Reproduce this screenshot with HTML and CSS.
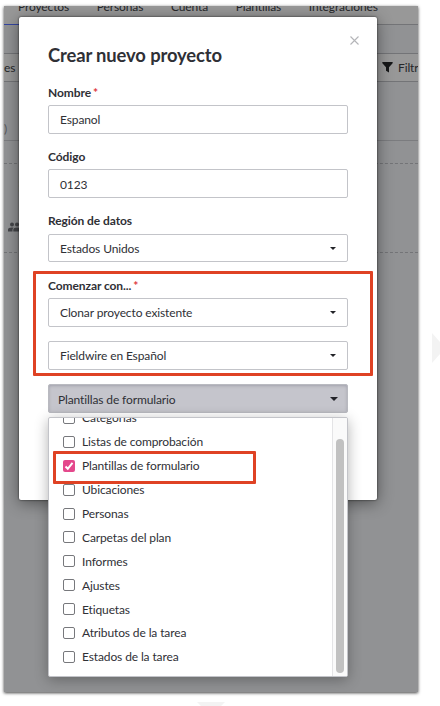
FILE: index.html
```html
<!DOCTYPE html>
<html lang="es">

<head>
    <meta charset="UTF-8">
    <meta name="viewport" content="width=device-width, initial-scale=1.0">
    <title>Crear nuevo proyecto</title>
    <link rel="stylesheet" href="styles.css">
</head>
<body>
    <div class="window">
        <!-- Dimmed page behind the dialog -->
        <div class="page">
            <nav class="tabs">
                <span>Proyectos</span>
                <span>Personas</span>
                <span>Cuenta</span>
                <span>Plantillas</span>
                <span>Integraciones</span>
            </nav>
            <div class="tab-line"></div>
            <div class="spacer"></div>
            <div class="toolbar">
                <span>es</span>
                <span class="filter">
                    <svg width="11" height="11" viewBox="0 0 11 11"><path d="M.8 0h9.4q1 .2.4 1.200L7 5.300v5.200L4 8.700V5.300L.4 1.200Q-.2.200.8 0z" fill="#161718"/></svg>
                    Filtros
                </span>
            </div>
            <div class="summary">)</div>
            <div class="gap-row"></div>
            <div class="project">
                <span class="dots">⋮</span>
                <svg class="people" width="18" height="10" viewBox="0 0 18 10" fill="#45464a"><circle cx="4" cy="2.4" r="2"/><circle cx="9" cy="2.4" r="2"/><path d="M0 9.500V7.600Q0 5.500 4 5.400q1 0 1.600.3Q4.500 6.500 4.500 7.700v1.800zM5.300 9.500V7.600Q5.400 5.500 9 5.400q4 .1 4 2.200v1.900z"/></svg>
            </div>
        </div>

        <!-- Dialog -->
        <div class="modal">
            <svg class="close" width="9" height="9" viewBox="0 0 9 9"><path d="M.5.5l8 8M8.500.5l-8 8" stroke="#b4b5b8" stroke-width="1.100"/></svg>
            <h1>Crear nuevo proyecto</h1>
            <label>Nombre <i>*</i></label>
            <div class="field">Espanol</div>
            <label>Código</label>
            <div class="field code">0123</div>
            <label class="region-label">Región de datos</label>
            <div class="field select region">Estados Unidos</div>
            <label>Comenzar con... <i>*</i></label>
            <div class="field select">Clonar proyecto existente</div>
            <div class="field select source">Fieldwire en Español</div>
            <div class="field select multi">Plantillas de formulario</div>
            <div class="highlight start-highlight"></div>

            <!-- Open menu -->
            <div class="menu">
                <ul>
                    <li><span class="box"></span>Categorías</li>
                    <li><span class="box"></span>Listas de comprobación</li>
                    <li><span class="box checked"><svg width="12" height="12" viewBox="0 0 12 12"><path d="M2.500 6.500l2.300 2.300 4.700-6" fill="none" stroke="#fff" stroke-width="2"/></svg></span>Plantillas de formulario</li>
                    <li><span class="box"></span>Ubicaciones</li>
                    <li><span class="box"></span>Personas</li>
                    <li><span class="box"></span>Carpetas del plan</li>
                    <li><span class="box"></span>Informes</li>
                    <li><span class="box"></span>Ajustes</li>
                    <li><span class="box"></span>Etiquetas</li>
                    <li><span class="box"></span>Atributos de la tarea</li>
                    <li><span class="box"></span>Estados de la tarea</li>
                </ul>
                <div class="scrollbar"><div class="thumb"></div></div>
            </div>
            <div class="highlight option-highlight"></div>
        </div>
    </div>

    <div class="mark mark-right"></div>
    <div class="mark mark-bottom"></div>
</body>

</html>
```
FILE: styles.css
```css
* {
    box-sizing: border-box;
    margin: 0;
    padding: 0;
}

body {
    position: relative;
    width: 440px;
    height: 706px;
    padding: 6px 22px 14px 4px;
    overflow: hidden;
    background-color: #fff;
    color: #2f3036;
    font-family: Lato, sans-serif;
    font-size: 12px;
    letter-spacing: -0.12px;
}

.window {
    position: relative;
    height: 686px;
    box-shadow: 0 1px 3px rgba(0, 0, 0, 0.75);
}

.page {
    height: 100%;
    overflow: hidden;
    background-color: #919294;
    color: #26272a;
}

.tabs {
    display: flex;
    gap: 27.7px;
    height: 17px;
    padding-left: 14px;
    background-color: #989898;
    line-height: 15px;
    white-space: nowrap;
}

.tabs span {
    margin-top: -7px;
}

.tab-line {
    height: 2px;
    background: linear-gradient(to right, #3546a0 15px, #737477 15px) bottom / 100% 1px no-repeat #989898;
}

.spacer {
    height: 28px;
}

.toolbar {
    display: flex;
    justify-content: space-between;
    align-items: center;
    height: 29px;
    border-top: 1px solid #737477;
    border-bottom: 1px solid #737477;
    background-color: #989898;
}

.filter {
    display: flex;
    align-items: center;
    gap: 5px;
    width: 36px;
    white-space: nowrap;
}

.filter svg {
    flex-shrink: 0;
}

.summary {
    height: 59px;
    padding-top: 39px;
    border-bottom: 1px solid #7b7c7f;
    color: #55565a;
}

.gap-row {
    height: 23px;
    border-bottom: 1px dashed #737477;
}

.project {
    height: 89px;
    padding: 15px 0 0 4px;
    border-bottom: 1px dashed #737477;
}

.dots {
    display: block;
    margin-left: 6px;
    line-height: 14px;
}

.people {
    display: block;
    margin-top: 29px;
}

/* Dialog */
.modal {
    position: absolute;
    top: 11px;
    left: 15px;
    width: 358px;
    height: 483px;
    padding: 27px 29px 0;
    border-radius: 2px;
    background-color: #fff;
    box-shadow: 0 3px 16px rgba(0, 0, 0, 0.45), 0 0 2px rgba(0, 0, 0, 0.8);
}

.close {
    position: absolute;
    top: 19px;
    right: 18px;
}

h1 {
    height: 42px;
    font-size: 18.4px;
    line-height: 23px;
    white-space: nowrap;
}

label {
    display: block;
    height: 19px;
    font-weight: bold;
    letter-spacing: -0.08px;
    line-height: 13px;
}

.region-label {
    height: 20px;
}

label i {
    margin-left: -1px;
    color: #e0383e;
    font-style: normal;
}

.field {
    display: flex;
    align-items: center;
    justify-content: space-between;
    height: 29px;
    margin-bottom: 16px;
    padding: 0 11px;
    border: 1px solid #c3c4c9;
    border-radius: 2px;
}

.field.code {
    padding-top: 2px;
}

.field.region {
    height: 28px;
    margin-bottom: 17px;
    padding-top: 1px;
}

.select::after {
    content: "";
    margin-top: -1px;
    border: 3px solid transparent;
    border-top-color: #222328;
    border-bottom: 0;
}

.field.source {
    margin: -2px 0 14px;
}

.field.multi {
    margin-bottom: 0;
    padding: 2px 9px 0;
    background-color: #c5c5cc;
    border-color: #b9bac0;
    box-shadow: inset 0 1px 3px rgba(60, 60, 80, 0.25);
}

.multi::after {
    border-width: 4px 4px 0;
}

/* Menu */
.menu {
    position: absolute;
    top: 400px;
    left: 29px;
    display: flex;
    width: 300px;
    height: 260px;
    overflow: hidden;
    border: 1px solid #c3c4c9;
    border-radius: 2px;
    background-color: #fff;
    box-shadow: 0 3px 14px rgba(0, 0, 0, 0.3);
}

.menu ul {
    flex: 1;
    margin-top: -12px;
    list-style: none;
}

.menu li {
    display: flex;
    align-items: center;
    gap: 7px;
    height: 23.9px;
    padding-left: 14px;
    line-height: 11px;
}

.box {
    width: 12px;
    height: 12px;
    border: 1px solid #77787c;
    border-radius: 2px;
}

.box.checked {
    border: 0;
    background-color: #e4488c;
}

.box svg {
    display: block;
}

.scrollbar {
    width: 15px;
    padding: 21px 3px 3px;
    border-left: 1px solid #e4e4e6;
    background-color: #fafafa;
}

.thumb {
    width: 8px;
    height: 100%;
    border-radius: 4px;
    background-color: #c1c1c1;
}

/* Red outlines */
.highlight {
    position: absolute;
    border: 3px solid #df4224;
    border-radius: 1px;
}

.start-highlight {
    top: 254px;
    left: 14px;
    width: 340px;
    height: 105px;
}

.option-highlight {
    top: 434px;
    left: 34px;
    width: 203px;
    height: 33px;
}

/* Faint marks at the edges */
.mark {
    position: absolute;
    background-color: #f3f3f3;
}

.mark-right {
    top: 333px;
    right: 0;
    width: 8px;
    height: 30px;
    clip-path: polygon(0 0, 100% 30%, 100% 70%, 0 100%);
}

.mark-bottom {
    bottom: 0;
    left: 197px;
    width: 28px;
    height: 4px;
    clip-path: polygon(0 0, 100% 0, 86% 100%, 14% 100%);
}
```
